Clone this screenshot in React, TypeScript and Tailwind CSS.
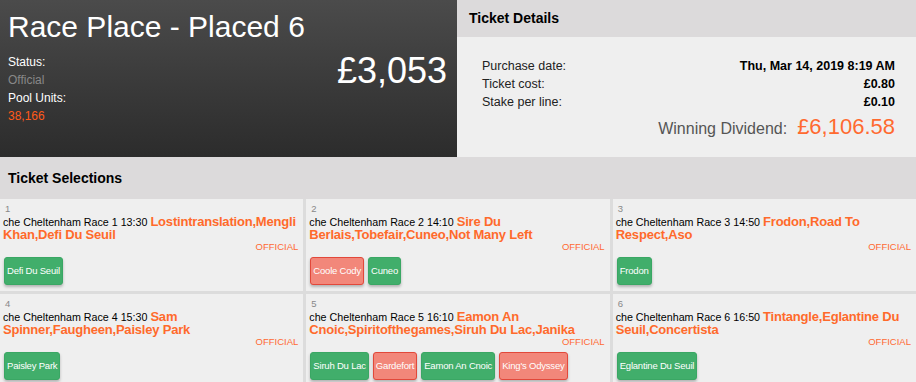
type Pick = { name: string; win: boolean };
type Selection = { n: number; race: string; horses: string; picks: Pick[] };

const selections: Selection[] = [
  {
    n: 1,
    race: "che Cheltenham Race 1 13:30",
    horses: "Lostintranslation,Mengli Khan,Defi Du Seuil",
    picks: [{ name: "Defi Du Seuil", win: true }],
  },
  {
    n: 2,
    race: "che Cheltenham Race 2 14:10",
    horses: "Sire Du Berlais,Tobefair,Cuneo,Not Many Left",
    picks: [
      { name: "Coole Cody", win: false },
      { name: "Cuneo", win: true },
    ],
  },
  {
    n: 3,
    race: "che Cheltenham Race 3 14:50",
    horses: "Frodon,Road To Respect,Aso",
    picks: [{ name: "Frodon", win: true }],
  },
  {
    n: 4,
    race: "che Cheltenham Race 4 15:30",
    horses: "Sam Spinner,Faugheen,Paisley Park",
    picks: [{ name: "Paisley Park", win: true }],
  },
  {
    n: 5,
    race: "che Cheltenham Race 5 16:10",
    horses: "Eamon An Cnoic,Spiritofthegames,Siruh Du Lac,Janika",
    picks: [
      { name: "Siruh Du Lac", win: true },
      { name: "Gardefort", win: false },
      { name: "Eamon An Cnoic", win: true },
      { name: "King's Odyssey", win: false },
    ],
  },
  {
    n: 6,
    race: "che Cheltenham Race 6 16:50",
    horses: "Tintangle,Eglantine Du Seuil,Concertista",
    picks: [{ name: "Eglantine Du Seuil", win: true }],
  },
];

const details = [
  { label: "Purchase date:", value: "Thu, Mar 14, 2019 8:19 AM" },
  { label: "Ticket cost:", value: "£0.80" },
  { label: "Stake per line:", value: "£0.10" },
];

const SelectionCell = ({ s }: { s: Selection }) => (
  <div className="bg-[#efefef] pl-[3px] pr-[5px] pt-[4px] pb-[6px]">
    <div className="pl-[2px] text-[9.5px] leading-[12px] text-[#888]">{s.n}</div>
    <p className="leading-[12px] text-black">
      <span className="text-[10.7px]">{s.race}</span>
      <span className="text-[10.7px]"> </span>
      <span className="text-[13px] font-bold tracking-[-0.2px] text-[#ff6a2b]">{s.horses}</span>
    </p>
    <div className="text-right text-[9.5px] leading-[12px] text-[#ff6a33]">OFFICIAL</div>
    <div className="mt-[4px] flex gap-[4px] pl-[1px]">
      {s.picks.map((p) => (
        <div
          key={p.name}
          className={
            p.win
              ? "flex h-[28px] items-center rounded-[3px] border border-[#3aa764] bg-[#41ae6b] px-[2px] text-[9.5px] tracking-[-0.2px] text-white shadow-[0_2px_3px_rgba(0,0,0,0.25)]"
              : "flex h-[28px] items-center rounded-[3px] border border-[#e2483a] bg-[#f2877a] px-[2px] text-[9.5px] tracking-[-0.2px] text-white shadow-[0_2px_3px_rgba(0,0,0,0.25)]"
          }
        >
          {p.name}
        </div>
      ))}
    </div>
  </div>
);

export default function App() {
  return (
    <div className="h-[382px] w-[916px] overflow-hidden bg-[#dcdcdc] font-['Liberation_Sans',Arial,sans-serif]">
      {/* top summary */}
      <div className="flex h-[157px]">
        <div className="flex w-[457px] flex-col bg-linear-to-b from-[#4b4b4b] to-[#2c2c2c] pl-[8px] pr-[10px] pt-[9px]">
          <h1 className="text-[30px] leading-[36px] text-white">Race Place - Placed 6</h1>
          <div className="mt-[8px] flex items-start justify-between">
            <div className="text-[12px] leading-[18px]">
              <div className="text-white">Status:</div>
              <div className="text-[#888]">Official</div>
              <div className="text-white">Pool Units:</div>
              <div className="text-[#ff5a1a]">38,166</div>
            </div>
            <div className="text-[36px] leading-[36px] text-white">£3,053</div>
          </div>
        </div>

        <div className="flex flex-1 flex-col bg-[#efefef]">
          <div className="flex h-[37px] items-center bg-[#dcdadb] pl-[12px] text-[14px] font-bold text-black">
            Ticket Details
          </div>
          <div className="pl-[25px] pr-[21px] pt-[20px] text-[12.5px] leading-[18px] text-[#222]">
            {details.map((d) => (
              <div key={d.label} className="flex justify-between">
                <span>{d.label}</span>
                <span className="font-bold text-black">{d.value}</span>
              </div>
            ))}
            <div className="mt-[7px] flex items-baseline justify-end gap-[10px]">
              <span className="text-[16px] text-[#555]">Winning Dividend:</span>
              <span className="text-[22px] text-[#ff6a30]">£6,106.58</span>
            </div>
          </div>
        </div>
      </div>

      {/* selections */}
      <div className="flex h-[42px] items-center bg-[#dcdadb] pl-[8px] text-[14px] font-bold text-black">
        Ticket Selections
      </div>
      <div className="grid grid-cols-3 gap-[3px]">
        {selections.map((s) => (
          <SelectionCell key={s.n} s={s} />
        ))}
      </div>
    </div>
  );
}
